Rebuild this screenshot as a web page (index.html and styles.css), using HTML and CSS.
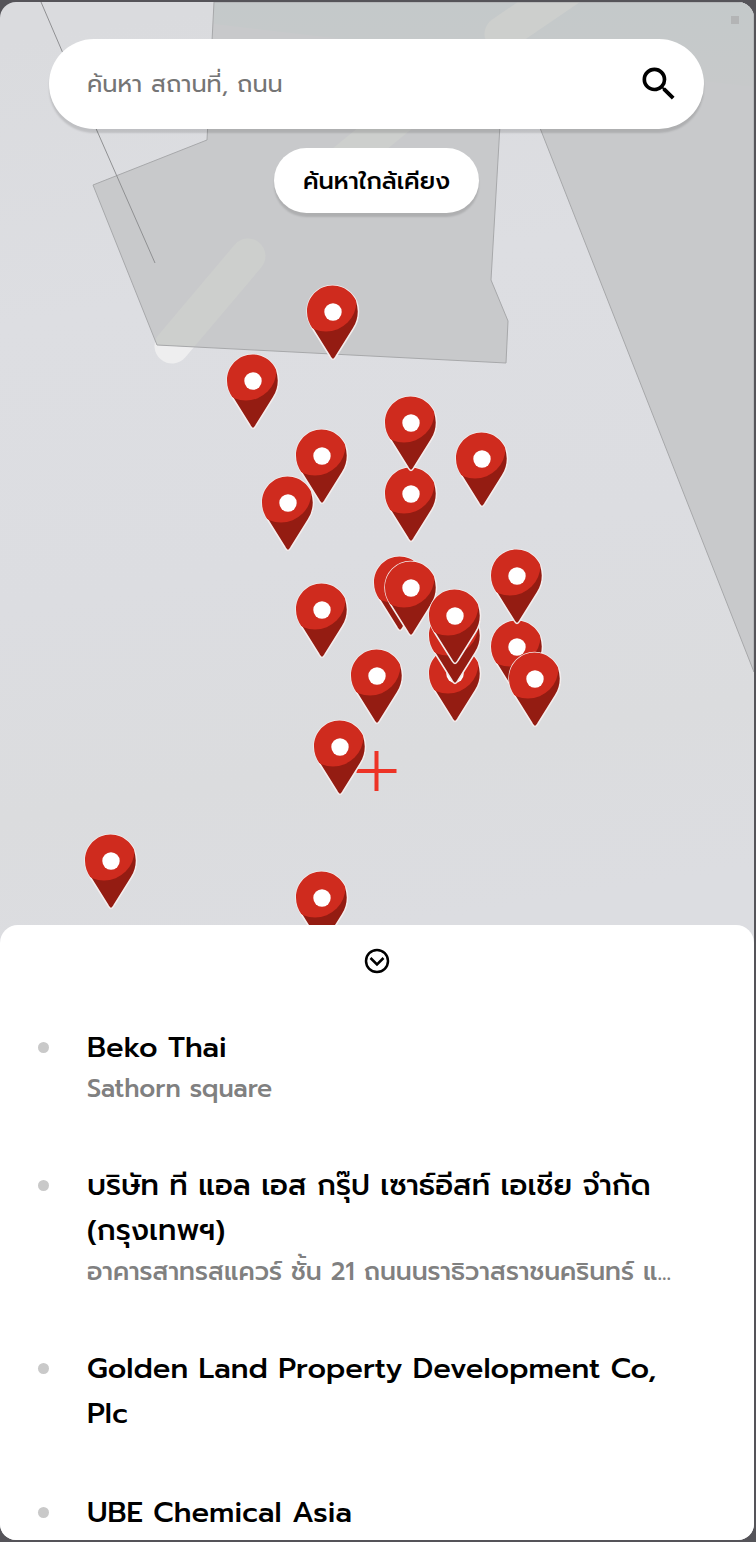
FILE: index.html
```html
<!DOCTYPE html>
<html lang="th">
<head>
<meta charset="utf-8">
<meta name="viewport" content="width=device-width, initial-scale=1">
<title>ค้นหาใกล้เคียง</title>
<link rel="stylesheet" href="styles.css">
</head>
<body>
<div class="app">
  <svg class="map" viewBox="0 0 754 1538" preserveAspectRatio="xMidYMin slice" aria-hidden="true">
    <defs>
      <linearGradient id="park" x1="0" y1="0" x2="0" y2="1">
        <stop offset="0" stop-color="#c4c9ca"/>
        <stop offset="1" stop-color="#c7c9ca"/>
      </linearGradient>
      <linearGradient id="ground" gradientUnits="userSpaceOnUse" x1="250" y1="0" x2="400" y2="924">
        <stop offset="0" stop-color="#dadbde"/>
        <stop offset=".3" stop-color="#dddee2"/>
        <stop offset=".6" stop-color="#dcdde1"/>
        <stop offset=".82" stop-color="#dbdcde"/>
        <stop offset="1" stop-color="#dcdde1"/>
      </linearGradient>
      <path id="building" d="M214 0L207 138L93 183L157 343L506 361L508 319L491 278L505 37L754 670V0Z"/>
      <clipPath id="building-clip"><use href="#building"/></clipPath>
      <path id="pin-shape" d="M0 47.500C-1.500 47.500-2 46-3 44.500L-20.500 16.500C-24 11-26 6-26-.500C-26-15-14.500-26.500-.500-26.500S25.500-15 25.500-.500C25.500 6 24 11 20.500 16.500L3 44.500C2 46 1.500 47.500 0 47.500Z"/>
      <clipPath id="pin-clip"><use href="#pin-shape"/></clipPath>
      <g id="pin">
        <use href="#pin-shape" fill="#941c12" stroke="#f4eeee" stroke-width="1.500"/>
        <circle cx="-7" cy="-11" r="30.500" fill="#cf2b1e" clip-path="url(#pin-clip)"/>
        <circle r="8.700" fill="#fff"/>
      </g>
    </defs>
    <rect width="754" height="1538" fill="url(#ground)"/>
    <path d="M248 254L172 344" stroke="#eeeeef" stroke-width="35" stroke-linecap="round"/>
    <use href="#building" fill="#c8c9cb"/>
    <path d="M214 0H754V85L214 22Z" fill="url(#park)"/>
    <g clip-path="url(#building-clip)" fill="none" stroke="#cdcfcd" stroke-width="35" stroke-linecap="round">
      <path d="M248 254L172 344M340 163L400 114M502 32L590-28"/>
    </g>
    <use href="#building" fill="none" stroke="#a7a8aa"/>
    <path d="M41 0L62 49L155 261" fill="none" stroke="#8f9092"/>
    <path d="M731 14H739V22H731Z" fill="#b3b4b5"/>
    <path d="M376.500 749V789M356.500 769H396.500" stroke="#ed3326" stroke-width="4"/>
    <g>
      <use href="#pin" x="333" y="310"/>
      <use href="#pin" x="253" y="379"/>
      <use href="#pin" x="411" y="492"/>
      <use href="#pin" x="411" y="421"/>
      <use href="#pin" x="482" y="457"/>
      <use href="#pin" x="322" y="454"/>
      <use href="#pin" x="288" y="501"/>
      <use href="#pin" x="400" y="581"/>
      <use href="#pin" x="411" y="586"/>
      <use href="#pin" x="322" y="608"/>
      <use href="#pin" x="455" y="672"/>
      <use href="#pin" x="455" y="634"/>
      <use href="#pin" x="455" y="614"/>
      <use href="#pin" x="517" y="645"/>
      <use href="#pin" x="517" y="574"/>
      <use href="#pin" x="535" y="677"/>
      <use href="#pin" x="377" y="674"/>
      <use href="#pin" x="340" y="745"/>
      <use href="#pin" x="111" y="859"/>
      <use href="#pin" x="322" y="896"/>
    </g>
  </svg>

  <main class="controls">
    <form class="search" role="search">
      <input class="search-input" type="text" placeholder="ค้นหา สถานที่, ถนน" aria-label="ค้นหา สถานที่, ถนน">
      <button class="search-button" type="button" aria-label="ค้นหา">
        <svg class="search-icon" viewBox="0 0 24 24"><path d="M15.500 14h-.79l-.28-.27A6.470 6.470 0 0 0 16 9.500 6.500 6.500 0 1 0 9.500 16c1.610 0 3.090-.59 4.230-1.570l.27.28v.79l5 4.990L20.490 19l-4.990-5zm-6 0C7.010 14 5 11.990 5 9.500S7.010 5 9.500 5 14 7.010 14 9.500 11.990 14 9.500 14z"/></svg>
      </button>
    </form>
    <button class="nearby" type="button">ค้นหาใกล้เคียง</button>
  </main>

  <section class="sheet">
    <button class="collapse" type="button" aria-label="ย่อรายการ">
      <svg class="collapse-icon" viewBox="0 0 26 26"><circle cx="13" cy="13" r="11"/><path d="M6.500 10L13 16.500L19.500 10"/></svg>
    </button>
    <ul class="places">
      <li class="place">
        <h2 class="place-name">Beko Thai</h2>
        <p class="place-address">Sathorn square</p>
      </li>
      <li class="place">
        <h2 class="place-name">บริษัท ที แอล เอส กรุ๊ป เซาธ์อีสท์ เอเชีย จำกัด (กรุงเทพฯ)</h2>
        <p class="place-address">อาคารสาทรสแควร์ ชั้น 21 ถนนนราธิวาสราชนครินทร์ แ...</p>
      </li>
      <li class="place">
        <h2 class="place-name">Golden Land Property Development Co, Plc</h2>
      </li>
      <li class="place">
        <h2 class="place-name">UBE Chemical Asia</h2>
      </li>
    </ul>
  </section>
</div>
</body>
</html>
```
FILE: styles.css
```css
* {
  box-sizing: border-box;
}

body {
  margin: 0;
  padding: 2px 2px 2px 0;
  background: #555459;
  color: #000;
  font-family: Prompt, "Noto Sans", "Noto Sans Thai", sans-serif;
}

button,
input {
  margin: 0;
  border: 0;
  background: none;
  color: inherit;
  font: inherit;
}

.app {
  position: relative;
  display: flex;
  flex-direction: column;
  height: calc(100vh - 4px);
  overflow: hidden;
  border-radius: 16px;
}

.map {
  position: absolute;
  inset: 0;
  width: 100%;
  height: 100%;
}

.controls {
  position: relative;
  flex: 3 1 0;
  display: flex;
  flex-direction: column;
  align-items: center;
  gap: 19px;
  padding: 37px 50px 0 49px;
}

.search {
  display: flex;
  align-items: center;
  width: 100%;
  height: 90px;
  padding: 0 23px 0 38px;
  border-radius: 45px;
  background: #fff;
  box-shadow: 0 4px 2px #00000021;
}

.search-input {
  flex: 1;
  min-width: 0;
  padding: 0;
  font-size: 24px;
  line-height: 39px;
  outline: 0;
}

.search-input::placeholder {
  color: #757575;
  opacity: 1;
}

.search-button,
.collapse {
  display: flex;
  padding: 0;
}

.search-icon {
  width: 44px;
  height: 44px;
}

.nearby {
  height: 65px;
  padding: 0 29px;
  border-radius: 33px;
  background: #fff;
  box-shadow: 0 4px 2px #00000021;
  font-size: 24px;
  font-weight: 500;
}

.sheet {
  position: relative;
  flex: 2 1 0;
  display: flex;
  flex-direction: column;
  align-items: center;
  gap: 51px;
  min-height: 0;
  padding: 23px 0 2px;
  overflow: hidden;
  border-radius: 18px 18px 0 0;
  background: #fff;
}

.collapse-icon {
  width: 26px;
  height: 26px;
  fill: none;
  stroke: #000;
  stroke-width: 2.5;
}

.places {
  display: flex;
  flex-direction: column;
  gap: 54px;
  width: 100%;
  margin: 0;
  padding: 0 70px 0 87px;
  list-style: none;
}

.place {
  position: relative;
}

.place::before {
  content: "";
  position: absolute;
  top: 17px;
  left: -49px;
  width: 11px;
  height: 11px;
  border-radius: 50%;
  background: #c9c9c9;
}

.place-name,
.place-address {
  margin: 0;
  font-weight: 500;
}

.place-name {
  font-size: 29px;
  line-height: 45px;
}

.place-address {
  overflow: hidden;
  color: #808080;
  font-size: 25px;
  line-height: 39px;
  text-overflow: ellipsis;
  white-space: nowrap;
}
```
